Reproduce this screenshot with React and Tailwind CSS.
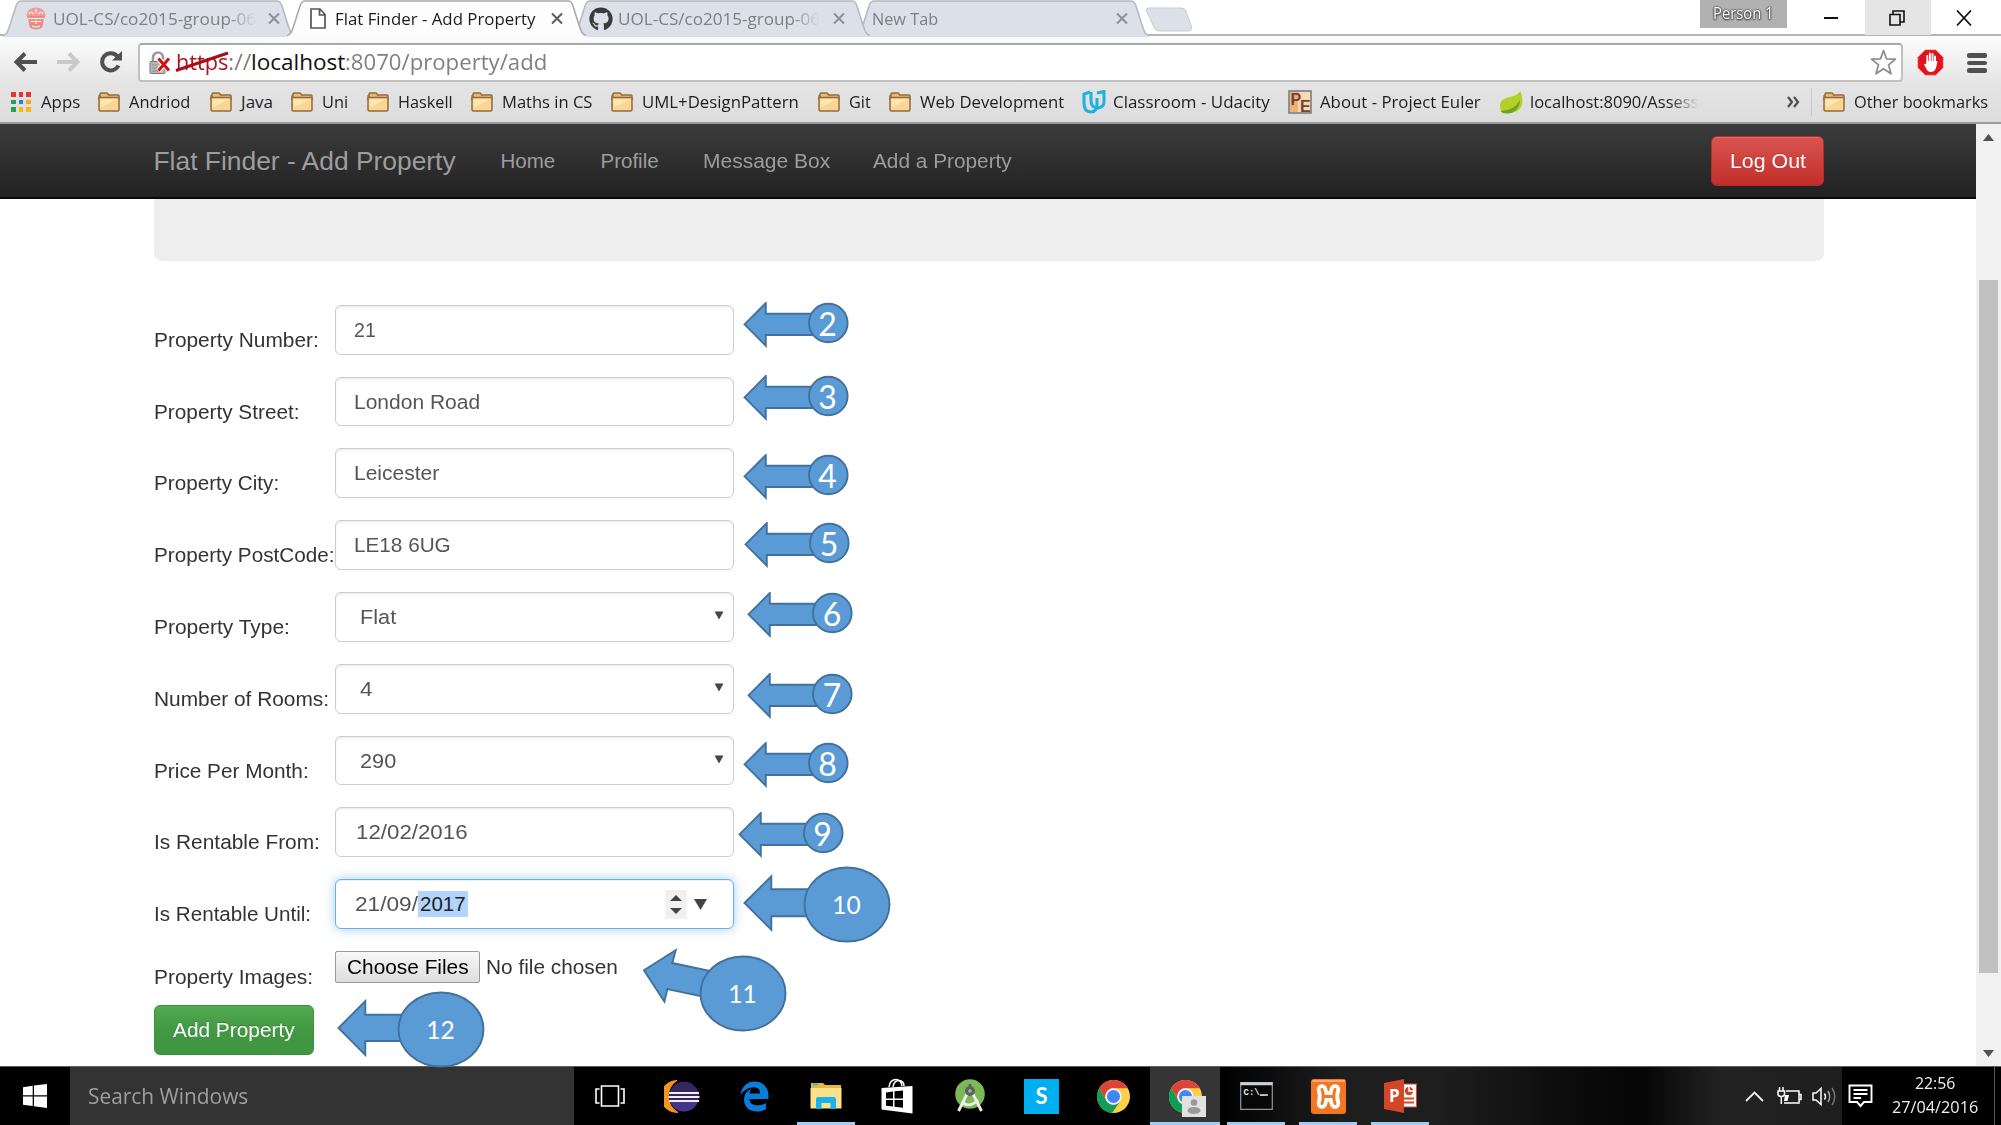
import { useLayoutEffect, useRef } from "react";
import { FaEdgeLegacy, FaGithub } from "react-icons/fa";

const ARIAL = "font-['Liberation_Sans',Arial,sans-serif]";
const SEGOE = "font-['Open_Sans','Noto_Sans',sans-serif]";

/* One line of text, condensed or stretched to the width of its box. */
function Fit({ className = "", children }) {
  const outer = useRef(null);
  const inner = useRef(null);
  useLayoutEffect(() => {
    const ratio = outer.current.getBoundingClientRect().width / inner.current.offsetWidth;
    inner.current.style.transform = `scaleX(${ratio})`;
  }, []);
  return (
    <span ref={outer} className={`block shrink-0 whitespace-nowrap ${className}`}>
      <span ref={inner} className="inline-block origin-left">{children}</span>
    </span>
  );
}

/* ---------- browser chrome ---------- */

function TabShape({ w, active }) {
  const d = `M1 35.5 C5 34.5 6 31 8 25 L14 6 Q15.5 1 19 1 H${w - 19} Q${w - 15.5} 1 ${w - 14} 6 L${w - 8} 25 C${w - 6} 31 ${w - 5} 34.5 ${w - 1} 35.5`;
  return (
    <svg className="absolute inset-0" width={w} height="37" viewBox={`0 0 ${w} 37`}>
      <path d={`${d} V37 H1 Z`} fill={active ? "#fdfdfd" : "#dce0e8"} />
      <path d={d} fill="none" stroke={active ? "#a9a9a9" : "#b7babf"} strokeWidth="1.6" />
    </svg>
  );
}

function TabClose({ color }) {
  return (
    <svg width="12" height="13" viewBox="0 0 12 13" className="shrink-0">
      <path d="M1 1.5 L11 11.5 M11 1.5 L1 11.5" stroke={color} strokeWidth="2" />
    </svg>
  );
}

function Crest() {
  return (
    <svg width="20" height="23" viewBox="0 0 20 23" className="shrink-0">
      <ellipse cx="10" cy="8" rx="9.5" ry="7.6" fill="#f19a96" />
      <path d="M2 9 H18 L16.5 20 Q10 25 3.5 20 Z" fill="#ee8883" />
      <path d="M3 7 Q5 3.500 7.500 7 M12.500 7 Q15 3.500 17 7 M10 2 V6 M2.500 11.500 H17.500 M5 14.500 H8.500 M11.500 14.500 H15 M6 19 Q10 21 14 19 M10 13 V17" stroke="#fff" strokeWidth="1.200" fill="none" />
    </svg>
  );
}

function TabStrip() {
  const text = `${SEGOE} text-[17px] leading-[24px]`;
  return (
    <div className="flex h-[36px] shrink-0 items-start border-b-2 border-[#b5b5b5] bg-white">
      <div className="relative ml-[2px] h-[35px] w-[294px] shrink-0">
        <TabShape w={294} />
        <div className="relative flex h-[37px] items-center pl-[24px]">
          <Crest />
          <div className="ml-[7px] mr-[12px] overflow-hidden [mask-image:linear-gradient(to_right,black_86%,transparent_100%)]">
            <Fit className={`${text} w-[203px] text-[#7d7f83]`}>UOL-CS/co2015-group-06</Fit>
          </div>
          <TabClose color="#8d9095" />
        </div>
      </div>
      <div className="relative z-20 -ml-[10px] h-[37px] w-[301px] shrink-0">
        <TabShape w={301} active />
        <div className="relative flex h-[37px] items-center pl-[24px]">
          <svg width="16" height="21" viewBox="0 0 16 21" className="shrink-0">
            <path d="M1 1 H10 L15 6.500 V20 H1 Z M9.500 1 V7 H15" fill="#fff" stroke="#555" strokeWidth="1.700" />
          </svg>
          <Fit className={`${text} ml-[9px] mr-[15px] w-[201px] text-[#1c1c1c]`}>Flat Finder - Add Property</Fit>
          <TabClose color="#5d5d5d" />
        </div>
      </div>
      <div className="relative z-10 -ml-[16px] h-[35px] w-[300px] shrink-0">
        <TabShape w={300} />
        <div className="relative flex h-[37px] items-center pl-[18px]">
          <FaGithub size={24} color="#3b3b3b" className="shrink-0" />
          <div className="ml-[5px] mr-[13px] overflow-hidden [mask-image:linear-gradient(to_right,black_86%,transparent_100%)]">
            <Fit className={`${text} w-[202px] text-[#7d7f83]`}>UOL-CS/co2015-group-06</Fit>
          </div>
          <TabClose color="#8d9095" />
        </div>
      </div>
      <div className="relative -ml-[16px] h-[35px] w-[295px] shrink-0">
        <TabShape w={295} />
        <div className="relative flex h-[37px] items-center pl-[17px]">
          <Fit className={`${text} mr-[178px] w-[66px] text-[#7d7f83]`}>New Tab</Fit>
          <TabClose color="#8d9095" />
        </div>
      </div>
      <svg width="48" height="25" viewBox="0 0 48 25" className="-ml-[5px] mt-[7px] shrink-0">
        <path d="M3 1 H36 Q40 1 41 4 L46.500 20 Q47 24 43 24 H14 Q10 24 9 20 L1.500 4 Q1 1 3 1 Z" fill="#dce0e8" stroke="#c9ccd1" />
      </svg>
      <div className="ml-auto flex items-start">
        <div className="flex h-[28px] w-[87px] items-center justify-center bg-[#b1b1b1] pb-[2px]">
          <Fit className={`${SEGOE} w-[61px] text-[16px] leading-[22px] text-white [text-shadow:0_0_2px_#333,0_0_2px_#444,0_1px_2px_#333]`}>Person 1</Fit>
        </div>
        <div className="flex h-[36px] w-[78px] items-center justify-center pl-[9px]">
          <div className="h-[2px] w-[14px] bg-[#111]" />
        </div>
        <div className="flex h-[35px] w-[66px] items-center justify-center bg-[#e5e5e5] pr-[2px]">
          <svg width="16" height="16" viewBox="0 0 16 16" fill="none" stroke="#111" strokeWidth="1.600">
            <path d="M1 4.500 H11 V15 H1 Z M4 4 V1 H15 V12 H11.500" />
          </svg>
        </div>
        <div className="flex h-[36px] w-[70px] items-center pl-[25px]">
          <svg width="16" height="16" viewBox="0 0 16 16">
            <path d="M1 0.500 L15 15.500 M15 0.500 L1 15.500" stroke="#111" strokeWidth="1.700" />
          </svg>
        </div>
      </div>
    </div>
  );
}

function Toolbar() {
  return (
    <div className="flex h-[53px] shrink-0 items-start pt-[7px]">
      <svg width="23" height="20" viewBox="0 0 23 20" className="ml-[14px] mt-[9px] shrink-0">
        <path d="M11 1.500 L2.500 10 L11 18.500 M3 10 H23" fill="none" stroke="#505050" strokeWidth="4" />
      </svg>
      <svg width="23" height="20" viewBox="0 0 23 20" className="ml-[20px] mt-[9px] shrink-0">
        <path d="M12 1.500 L20.500 10 L12 18.500 M20 10 H0" fill="none" stroke="#c9c9c9" strokeWidth="4" />
      </svg>
      <svg width="24" height="22" viewBox="0 0 24 22" className="ml-[19px] mt-[8px] shrink-0">
        <path d="M18.500 5.500 A8.600 8.600 0 1 0 19.500 14.500" fill="none" stroke="#505050" strokeWidth="4" />
        <path d="M23 0 V9.500 H13 Z" fill="#505050" />
      </svg>
      <div className="ml-[15px] flex h-[39px] w-[1765px] shrink-0 items-center rounded-[4px] border-2 border-[#c0c0c0] border-t-[#a9a9a9] bg-white pl-[9px]">
        <svg width="22" height="25" viewBox="0 0 22 25" className="mt-[1px] shrink-0">
          <path d="M4 11 V6.500 A5 5 0 0 1 14 6.500 V11" fill="none" stroke="#9b9b9b" strokeWidth="2.600" />
          <rect x="1" y="10.500" width="15" height="12" rx="1" fill="#b9b9b9" stroke="#777" />
          <path d="M3 14 H9 M3 17 H9 M3 20 H9" stroke="#8d8d8d" />
          <path d="M9.500 7.500 L20 19.500 M20 7.500 L9.500 19.500" stroke="#fff" strokeWidth="5" />
          <path d="M9.500 7.500 L20 19.500 M20 7.500 L9.500 19.500" stroke="#cf1010" strokeWidth="3" />
        </svg>
        <div className={`${SEGOE} -mt-[1px] ml-[5px] flex text-[22.5px] leading-[34px]`}>
          <div className="relative text-[#a8151f]">
            <Fit className="w-[52px]">https</Fit>
            <svg width="56" height="22" viewBox="0 0 56 22" className="absolute -left-[1px] top-[6px]">
              <path d="M1 19.500 L53 2" stroke="#a80f19" strokeWidth="3" />
            </svg>
          </div>
          <Fit className="w-[23px] text-[#808080]">://</Fit>
          <Fit className="w-[94px] text-[#111]">localhost</Fit>
          <Fit className="w-[202px] text-[#808080]">:8070/property/add</Fit>
        </div>
        <svg width="27" height="27" viewBox="0 0 27 27" className="ml-auto mr-[4px]">
          <path d="M13.500 1.500 L16.500 9.800 L25.500 10.200 L18.500 15.800 L21 24.800 L13.500 19.800 L6 24.800 L8.500 15.800 L1.500 10.200 L10.500 9.800 Z" fill="#fff" stroke="#8b8b8b" strokeWidth="1.700" strokeLinejoin="round" />
        </svg>
      </div>
      <svg width="27" height="27" viewBox="0 0 27 27" className="ml-[14px] mt-[6px] shrink-0">
        <path d="M8.200 0.700 H18.800 L26.300 8.200 V18.800 L18.800 26.300 H8.200 L0.700 18.800 V8.200 Z" fill="#e4121c" stroke="#f1b7b7" strokeWidth="0.800" />
        <path d="M10.300 15 V7 M12.900 13 V4.500 M15.500 13 V5 M18 14 V7.500" stroke="#fff" strokeWidth="1.900" strokeLinecap="round" />
        <path d="M9.400 12 H19 L20.500 12.500 L19 19 Q17.500 23 14 23 Q10.500 23 9.500 20 L7 15.500 Q7.500 14 9.400 15.500 Z" fill="#fff" />
      </svg>
      <div className="ml-[23px] mt-[10px] flex flex-col gap-[3px]">
        <div className="h-[4.500px] w-[20px] rounded-[2px] bg-[#505050]" />
        <div className="h-[4.500px] w-[20px] rounded-[2px] bg-[#505050]" />
        <div className="h-[4.500px] w-[20px] rounded-[2px] bg-[#505050]" />
      </div>
    </div>
  );
}

function Folder() {
  return (
    <svg width="22" height="20" viewBox="0 0 22 20" className="shrink-0">
      <path d="M2 4 V2 Q2 1 3 1 H9 Q10 1 10.500 3 H20 Q21 3 21 4 V7 H1 V4 Z" fill="#e8bb72" stroke="#94693c" strokeWidth="1.500" />
      <path d="M1.800 5.500 H20.200 Q21 5.500 21 6.500 V17.500 Q21 19 19.500 19 H2.500 Q1 19 1 17.500 V6.500 Q1 5.500 1.800 5.500 Z" fill="#fbd692" stroke="#94693c" strokeWidth="1.500" />
      <path d="M2.500 7 H19.500 L3 15 Z" fill="#fee6b6" />
    </svg>
  );
}

const APP_DOTS = ["#e8372c", "#e8372c", "#e8372c", "#23a155", "#2a7bf0", "#f5a623", "#23a155", "#fbb70f", "#fbb70f"];

const FOLDERS = [
  ["Andriod", "w-[61px] mr-[20px]"],
  ["Java", "w-[32px] mr-[18px]"],
  ["Uni", "w-[26px] mr-[18.5px]"],
  ["Haskell", "w-[54.5px] mr-[18.5px]"],
  ["Maths in CS", "w-[90.5px] mr-[18.5px]"],
  ["UML+DesignPattern", "w-[157px] mr-[19px]"],
  ["Git", "w-[22px] mr-[18.5px]"],
  ["Web Development", "w-[144.5px] mr-[17.5px]"],
];

function Bookmarks() {
  return (
    <div className={`${SEGOE} flex h-[35px] shrink-0 items-center border-b-2 border-[#9a9a9a] pb-[7px] pl-[11px] text-[17px] leading-[26px] text-[#1d1d1d]`}>
      <div className="grid shrink-0 grid-cols-3 gap-x-[3px] gap-y-[3px]">
        {APP_DOTS.map((c, i) => (
          <div key={i} className="h-[4.700px] w-[4.700px]" style={{ background: c }} />
        ))}
      </div>
      <Fit className="ml-[10px] mr-[17.5px] w-[39.5px]">Apps</Fit>
      {FOLDERS.map(([name, cls]) => (
        <div key={name} className="flex shrink-0 items-center gap-[9px]">
          <Folder />
          <Fit className={cls}>{name}</Fit>
        </div>
      ))}
      <svg width="24" height="24" viewBox="0 0 24 24" className="shrink-0">
        <path d="M8 2 L2 4 V13 Q2 22 9 22 Q15 22 15 14 V8 M15 3 L22 1.500 V12 Q22 17 16 18 Q9 17.500 9 11 V2" fill="none" stroke="#1cb1e2" strokeWidth="3" />
      </svg>
      <Fit className="ml-[7px] mr-[18px] w-[156.5px]">Classroom - Udacity</Fit>
      <svg width="24" height="24" viewBox="0 0 24 24" className="shrink-0">
        <rect x="1" y="1" width="22" height="22" fill="#fbd8b3" stroke="#777" strokeWidth="1.500" />
        <path d="M2 2 H10 V22 H2 Z" fill="#efb07c" />
        <text x="2.500" y="15" fontSize="16" fontWeight="700" fontFamily="Liberation Sans" fill="#6b4636">P</text>
        <text x="12" y="21.500" fontSize="16" fontWeight="700" fontFamily="Liberation Sans" fill="#6b4636">E</text>
      </svg>
      <Fit className="ml-[8px] mr-[18.5px] w-[161px]">About - Project Euler</Fit>
      <svg width="24" height="23" viewBox="0 0 24 23" className="shrink-0">
        <path d="M21.500 0 Q27 16 17 20.500 Q8 24 2 20 Q-2 9 9 6.500 Q18 5 21.500 0 Z" fill="#b3d028" />
        <path d="M1.500 20 Q15 20 21 9 Q20 22 8 22.500 Q3 22.500 1.500 20 Z" fill="#6ba51f" />
      </svg>
      <div className="ml-[7px] overflow-hidden [mask-image:linear-gradient(to_right,black_82%,transparent_100%)]">
        <Fit className="w-[169px]">localhost:8090/Assess</Fit>
      </div>
      <svg width="13" height="12" viewBox="0 0 13 12" className="ml-[88px] shrink-0">
        <path d="M1 1 L5 6 L1 11 M7 1 L11 6 L7 11" fill="none" stroke="#4c4c4c" strokeWidth="2.200" />
      </svg>
      <div className="ml-[11px] mr-[11px] h-[28px] w-px bg-[#c3cbd2]" />
      <Folder />
      <Fit className="ml-[8.5px] w-[134.5px]">Other bookmarks</Fit>
    </div>
  );
}

/* ---------- web page ---------- */

const NAV = [
  ["Home", "w-[55px] mr-[45px]"],
  ["Profile", "w-[58px] mr-[44px]"],
  ["Message Box", "w-[127px] mr-[43px]"],
  ["Add a Property", "w-[139px]"],
];

function Navbar() {
  return (
    <div className="flex h-[75px] shrink-0 items-center border-b-2 border-[#090909] bg-linear-to-b from-[#3c3c3c] to-[#222222] px-[153.5px] text-[#9d9d9d]">
      <Fit className="mr-[45px] w-[302px] text-[26.4px] leading-[36px]">Flat Finder - Add Property</Fit>
      {NAV.map(([name, cls]) => (
        <Fit key={name} className={`${cls} text-[20.5px] leading-[32px]`}>{name}</Fit>
      ))}
      <div className="ml-auto mr-[-1.5px] flex h-[50px] w-[113px] items-center justify-center rounded-[6px] border-[1.500px] border-[#b92c28] bg-linear-to-b from-[#d9534f] to-[#c12e2a] text-[20.5px] leading-[32px] text-white shadow-[inset_0_1px_0_rgba(255,255,255,0.15)] [text-shadow:0_-1px_0_rgba(0,0,0,0.2)]">
        <Fit className="w-[76px]">Log Out</Fit>
      </div>
    </div>
  );
}

const FIELDS = [
  { label: "Property Number:", lw: "w-[165px]", value: "21", vw: "w-[22px]", kind: "text" },
  { label: "Property Street:", lw: "w-[146px]", value: "London Road", vw: "w-[126px]", kind: "text" },
  { label: "Property City:", lw: "w-[125px]", value: "Leicester", vw: "w-[85px]", kind: "text" },
  { label: "Property PostCode:", lw: "w-[180.5px]", value: "LE18 6UG", vw: "w-[97px]", kind: "text" },
  { label: "Property Type:", lw: "w-[136px]", value: "Flat", vw: "w-[36px]", kind: "select" },
  { label: "Number of Rooms:", lw: "w-[175px]", value: "4", vw: "w-[12px]", kind: "select" },
  { label: "Price Per Month:", lw: "w-[155px]", value: "290", vw: "w-[36px]", kind: "select" },
  { label: "Is Rentable From:", lw: "w-[166px]", value: "12/02/2016", vw: "w-[112px]", kind: "date" },
];

const INPUT = "flex h-[49.8px] w-[398.5px] items-center rounded-[6px] border-[1.600px] border-[#ccc] bg-white text-[#555] shadow-[inset_0_1.500px_1.500px_rgba(0,0,0,0.075)] leading-[32px]";

function Label({ className, children }) {
  return (
    <div className="w-[181.500px] shrink-0 pt-[19px] leading-[32px] text-[#333]">
      <Fit className={className}>{children}</Fit>
    </div>
  );
}

function Field({ field }) {
  const { label, lw, value, vw, kind } = field;
  const pad = kind === "text" ? "pl-[18px]" : kind === "select" ? "pl-[23.5px]" : "pl-[19.5px]";
  return (
    <div className="flex h-[49.800px]">
      <Label className={lw}>{label}</Label>
      <div className={`${INPUT} ${pad}`}>
        <Fit className={vw}>{value}</Fit>
        {kind === "select" && (
          <svg width="10" height="9" viewBox="0 0 10 9" className="ml-auto mr-[8.5px] mt-[-3px]">
            <path d="M0.500 0.500 H9.500 L5 8.500 Z" fill="#444" />
          </svg>
        )}
      </div>
    </div>
  );
}

function FocusedDate() {
  return (
    <div className="flex h-[49.800px]">
      <Label className="w-[157px]">Is Rentable Until:</Label>
      <div className="flex h-[49.800px] w-[398.5px] items-center rounded-[6px] border-[1.800px] border-[#66afe9] bg-white pl-[19px] leading-[26px] text-[#555] shadow-[inset_0_1px_1px_rgba(0,0,0,0.075),0_0_12px_rgba(102,175,233,0.600)]">
        <Fit className="w-[63px]">21/09/</Fit>
        <div className="h-[26px] bg-[#b3d4fd] px-[2px] text-[#222]">
          <Fit className="w-[46px]">2017</Fit>
        </div>
        <div className="ml-auto mr-[7px] flex h-[29px] w-[22px] flex-col items-center justify-center gap-[7px] bg-[#f0f0f0]">
          <svg width="12" height="6" viewBox="0 0 12 6"><path d="M0 6 H12 L6 0 Z" fill="#444" /></svg>
          <svg width="12" height="6" viewBox="0 0 12 6"><path d="M0 0 H12 L6 6 Z" fill="#444" /></svg>
        </div>
        <svg width="13" height="11" viewBox="0 0 13 11" className="mr-[26px]"><path d="M0 0 H13 L6.500 11 Z" fill="#444" /></svg>
      </div>
    </div>
  );
}

function PropertyForm() {
  return (
    <div className="ml-[153.5px] mt-[43.900px] flex flex-col gap-[22px] text-[20.5px]">
      {FIELDS.map((f) => <Field key={f.label} field={f} />)}
      <FocusedDate />
      <div className="flex h-[32px]">
        <div className="w-[181.500px] shrink-0 pt-[10px] leading-[32px] text-[#333]">
          <Fit className="w-[159px]">Property Images:</Fit>
        </div>
        <div className="flex h-[32px] w-[145px] items-center justify-center rounded-[2px] border-[1.500px] border-[#9a9a9a] bg-linear-to-b from-[#f8f8f8] to-[#dddddd] leading-[28px] text-black">
          <Fit className="w-[122px]">Choose Files</Fit>
        </div>
        <Fit className="ml-[5.500px] w-[132px] leading-[32px] text-[#333]">No file chosen</Fit>
      </div>
      <div className="flex h-[50px] w-[160px] items-center justify-center rounded-[6px] border-[1.500px] border-[#3e8f3e] bg-linear-to-b from-[#51a951] to-[#419641] to-60% leading-[32px] text-white [text-shadow:0_-1px_0_rgba(0,0,0,0.2)]">
        <Fit className="w-[122px]">Add Property</Fit>
      </div>
    </div>
  );
}

function Scrollbar() {
  return (
    <div className="flex w-[25px] shrink-0 flex-col items-center bg-[#f1f1f1]">
      <svg width="11" height="7" viewBox="0 0 11 7" className="mt-[10px] shrink-0"><path d="M0 7 H11 L5.500 0 Z" fill="#505050" /></svg>
      <div className="mt-[139px] h-[693px] w-[19px] shrink-0 bg-[#c1c1c1]" />
      <svg width="11" height="7" viewBox="0 0 11 7" className="mb-[9px] mt-auto shrink-0"><path d="M0 0 H11 L5.500 7 Z" fill="#505050" /></svg>
    </div>
  );
}

/* ---------- numbered callouts floating over the page ---------- */

const SMALL = [
  [2, 742.5, 302], [3, 742.5, 374.700], [4, 742.5, 454], [5, 744, 522],
  [6, 747, 591.800], [7, 747, 672.700], [8, 742.5, 742], [9, 737.5, 812],
];

const BIG = [
  [10, 743, 866, 61, "M1.500 37 L28.300 10.300 V23.300 H80 V50.300 H28.300 V63.700 Z"],
  [11, 642, 955, 58, "M2 15.300 L33.800 -5 L30.300 8 L82 19 L72 44 L25.400 34 L22.400 46.700 Z"],
  [12, 337, 991, 61, "M1.500 37 L28.300 10 V23.700 H80 V50 H28.300 V64 Z"],
];

function Callouts() {
  return (
    <>
      {SMALL.map(([n, x, y]) => (
        <div key={n} className="absolute h-[46px] w-[107px]" style={{ left: x, top: y }}>
          <svg width="107" height="46" viewBox="0 0 107 46" fill="#5b9bd5" stroke="#41719c" strokeWidth="1.900">
            <path d="M1.500 22.300 L22.800 1 V11.700 H80 V33 H22.800 V43.600 Z" />
            <circle cx="85.300" cy="21" r="19.300" />
          </svg>
          <div className="absolute left-[65px] top-[2px] flex h-[40px] w-[40px] items-center justify-center font-[Lato,sans-serif] text-[32px] leading-[40px] text-white">{n}</div>
        </div>
      ))}
      {BIG.map(([n, x, y, ex, d]) => (
        <div key={n} className="absolute h-[78px] w-[150px]" style={{ left: x, top: y }}>
          <svg width="150" height="78" viewBox="0 0 150 78" className="overflow-visible" fill="#5b9bd5" stroke="#41719c" strokeWidth="1.900">
            <path d={d} />
            <ellipse cx={ex + 43} cy="38.500" rx="42.500" ry="37" />
          </svg>
          <div className="absolute top-[19px] w-[86px] text-center font-[Lato,sans-serif] text-[24.5px] leading-[40px] text-white" style={{ left: ex - 0.5 }}>{n}</div>
        </div>
      ))}
    </>
  );
}

/* ---------- taskbar ---------- */

function ChromeLogo() {
  return (
    <svg width="33" height="33" viewBox="0 0 48 48">
      <circle cx="24" cy="24" r="24" fill="#fdd04a" />
      <path d="M3.200 12 A24 24 0 0 1 44.800 12 H24 A12 12 0 0 0 13.600 30 Z" fill="#db4437" />
      <path d="M3.200 12 A24 24 0 0 0 22 48 L34.400 30 A12 12 0 0 1 13.600 30 Z" fill="#0f9d58" />
      <circle cx="24" cy="24" r="12" fill="#f1f1f1" />
      <circle cx="24" cy="24" r="9.500" fill="#4285f4" />
    </svg>
  );
}

function Eclipse() {
  return (
    <svg width="36" height="33" viewBox="0 0 36 33">
      <path d="M13 0.500 A17 16 0 0 0 14 32.500 A20 19 0 0 1 13 0.500 Z" fill="#f7941e" stroke="#f7941e" />
      <circle cx="20" cy="16.500" r="15" fill="#33285c" />
      <path d="M6 21 H34 Q31 31 20 31.500 Q9 31 6 21 Z" fill="#46338b" />
      <path d="M5 13 H35 M4.500 17 H35.500 M5 21 H35" stroke="#f2effa" strokeWidth="2" />
    </svg>
  );
}

function Explorer() {
  return (
    <svg width="32" height="28" viewBox="0 0 32 28">
      <path d="M1 1 H13 L15 3 H31 V26 H1 Z" fill="#e9b83c" />
      <path d="M0.500 6 H31.500 V26.500 H0.500 Z" fill="#fbe18c" />
      <path d="M3 2.500 H8" stroke="#2fb5e8" strokeWidth="2" />
      <path d="M6 27 V17 Q6 15 8 15 H24 Q26 15 26 17 V27 H20.500 V21 H11.500 V27 Z" fill="#16b3f0" />
    </svg>
  );
}

function Store() {
  return (
    <svg width="32" height="36" viewBox="0 0 32 36">
      <path d="M8 9 Q9 1.500 15 1.500 Q20 1.500 21 8 M12 9 Q13 2.500 18 2.500 Q23 3 23 8" fill="none" stroke="#fff" strokeWidth="1.500" />
      <path d="M0.500 10 L31.500 8 V35.500 L0.500 31.500 Z" fill="#fff" />
      <path d="M5 14.500 L12 13.500 V20.500 H5 Z M13.500 13.300 L22 12.500 V20.500 H13.500 Z M5 22 H12 V28.500 L5 27.800 Z M13.500 22 H22 V29.700 L13.500 28.800 Z" fill="#000" />
    </svg>
  );
}

function AndroidStudio() {
  return (
    <svg width="30" height="34" viewBox="0 0 30 34">
      <circle cx="15" cy="15" r="14.800" fill="#7cb853" />
      <path d="M12 15 L3.500 32 M18 15 L26.500 32" stroke="#ededed" strokeWidth="2.800" />
      <path d="M8 24 Q15 29 23 21" fill="none" stroke="#ededed" strokeWidth="2.800" />
      <circle cx="15" cy="12" r="5" fill="#5d6163" />
      <path d="M15 5 V9" stroke="#5d6163" strokeWidth="3" />
      <circle cx="15" cy="12" r="1.800" fill="#9cc67c" />
    </svg>
  );
}

function Skype() {
  return <div className="flex h-[35px] w-[35px] items-center justify-center bg-[#00aff0] font-[Lato,sans-serif] text-[22px] font-bold leading-none text-white">S</div>;
}

function ChromeProfile() {
  return (
    <div className="relative h-[33px] w-[33px]">
      <ChromeLogo />
      <svg width="24" height="21" viewBox="0 0 24 21" className="absolute left-[13px] top-[16px]">
        <path d="M0 0 H24 V21 H0 Z" fill="#e1e1e1" />
        <circle cx="12" cy="6.500" r="3.300" fill="#9a9a9a" />
        <ellipse cx="12" cy="14.500" rx="6.500" ry="3.500" fill="#9a9a9a" />
      </svg>
    </div>
  );
}

function Cmd() {
  return (
    <svg width="33" height="28" viewBox="0 0 33 28">
      <path d="M0.700 0.700 H32.300 V27.300 H0.700 Z" fill="#070707" stroke="#8e979c" strokeWidth="1.200" />
      <path d="M0.500 1.800 H32.500" stroke="#cbd1d6" strokeWidth="3" />
      <text x="3.500" y="13" fontSize="9" fontWeight="700" fontFamily="Liberation Mono" fill="#eee">C:\_</text>
      <path d="M20 13 H28" stroke="#eee" strokeWidth="1.400" />
    </svg>
  );
}

function Xampp() {
  const bone = "M11 10.500 Q13.500 17.500 11 24.500 M24 10.500 Q21.500 17.500 24 24.500 M12 17.500 H23";
  return (
    <svg width="35" height="35" viewBox="0 0 35 35" fill="none" strokeLinecap="round">
      <rect width="35" height="35" rx="3" fill="#f37623" />
      <path d="M2 2 H33" stroke="#f9a873" strokeWidth="2" />
      <path d={bone} stroke="#fff" strokeWidth="10.500" />
      <path d={bone} stroke="#f37623" strokeWidth="3" />
    </svg>
  );
}

function PowerPoint() {
  return (
    <svg width="33" height="34" viewBox="0 0 33 34">
      <path d="M17 5 H32.500 V28 H17 Z" fill="#fff" stroke="#d24726" strokeWidth="1.200" />
      <circle cx="25" cy="12" r="4.200" fill="#d24726" />
      <path d="M25 7 V12 H30" stroke="#fff" strokeWidth="1.500" fill="none" />
      <path d="M20 19.500 H30 M20 23.500 H30" stroke="#d24726" strokeWidth="2" />
      <path d="M0 4 L20 0 V34 L0 30 Z" fill="#d24726" />
      <text x="5" y="23" fontSize="17" fontWeight="700" fontFamily="Open Sans" fill="#fff">P</text>
    </svg>
  );
}

const TASKS = [
  { icon: <Eclipse />, w: "w-[72px]" },
  { icon: <FaEdgeLegacy size={31} color="#0a7cdb" />, w: "w-[72px]" },
  { icon: <Explorer />, w: "w-[71px]", line: "w-[58px]" },
  { icon: <Store />, w: "w-[72px]" },
  { icon: <AndroidStudio />, w: "w-[73px]" },
  { icon: <Skype />, w: "w-[71px]" },
  { icon: <ChromeLogo />, w: "w-[73px]" },
  { icon: <ChromeProfile />, w: "w-[70px] bg-[#353535]", line: "w-[70px]" },
  { icon: <Cmd />, w: "w-[72px]", line: "w-[58px]" },
  { icon: <Xampp />, w: "w-[72px]", line: "w-[58px]" },
  { icon: <PowerPoint />, w: "w-[72px]", line: "w-[58px]" },
];

function Taskbar() {
  return (
    <div className="flex h-[59px] shrink-0 items-stretch border-t-[1.500px] border-[#5e5e5e] bg-[linear-gradient(to_right,#000_61%,#1e1e1e_67%,#1e1e1e_72%,#0d0d0d_78%,#050505_82%,#222_86%,#1e1e1e_92%)]">
      <div className="flex w-[70px] items-center justify-center bg-black">
        <svg width="24" height="24" viewBox="0 0 24 24" fill="#fff">
          <path d="M0 3.200 L9.700 1.800 V11.300 H0 Z M11 1.600 L24 0 V11.300 H11 Z M0 12.600 H9.700 V22.100 L0 20.800 Z M11 12.600 H24 V24 L11 22.300 Z" />
        </svg>
      </div>
      <div className="flex w-[504px] items-center bg-[#333] pl-[18px]">
        <Fit className={`${SEGOE} w-[160px] text-[21px] leading-[32px] text-[#9f9f9f]`}>Search Windows</Fit>
      </div>
      <div className="flex w-[72px] items-center justify-center">
        <svg width="30" height="22" viewBox="0 0 30 22" fill="none" stroke="#fff" strokeWidth="1.600">
          <path d="M6.500 1 H23.500 V21 H6.500 Z M4.500 4 H1 V18 H4.500 M25.500 4 H29 V18 H25.500" />
        </svg>
      </div>
      {TASKS.map((t, i) => (
        <div key={i} className={`relative flex shrink-0 items-center justify-center ${t.w}`}>
          {t.icon}
          {t.line && <div className={`absolute bottom-0 h-[3px] bg-[#9fcdf7] ${t.line}`} />}
        </div>
      ))}
      <div className="ml-auto flex items-center">
        <svg width="19" height="11" viewBox="0 0 19 11" className="mr-[13px]"><path d="M1 10 L9.500 1.500 L18 10" fill="none" stroke="#eee" strokeWidth="1.800" /></svg>
        <svg width="25" height="18" viewBox="0 0 25 18" className="mr-[10px]" fill="none" stroke="#fff" strokeWidth="1.500">
          <path d="M9 4 H22 V16 H7 M22 7.500 H24 V12.500 H22 M2.500 0 V4 M6 0 V4 M1 4 H7.500 V7 Q7.500 9.500 4.300 9.500 Q1 9.500 1 7 Z M4.300 9.500 V17" />
          <path d="M8 8 H12 L10.500 14 H7 Z" fill="#fff" stroke="none" />
        </svg>
        <svg width="26" height="21" viewBox="0 0 26 21" className="mr-[4px]" fill="none" stroke="#fff" strokeWidth="1.500">
          <path d="M1 7 H4 L9 2.500 V18.500 L4 14 H1 Z M12.500 7.500 Q14.500 10.500 12.500 13.500" />
          <path d="M16 5 Q19.500 10.500 16 16" stroke="#aaa" />
          <path d="M20 2 Q25.500 10.500 20 19" stroke="#777" />
        </svg>
      </div>
      <div className="flex w-[159px] items-center bg-black pl-[6px]">
        <svg width="25" height="24" viewBox="0 0 25 24" fill="none" stroke="#fff" strokeWidth="1.900">
          <path d="M1.500 1.500 H23.500 V18 H16 L12.500 22 L9 18 H1.500 Z M5.500 6 H19.500 M5.500 10 H19.500 M5.500 14 H13" />
        </svg>
        <div className={`${SEGOE} -mt-[2px] ml-[19px] flex flex-col items-center text-[17px] leading-[24.500px] text-[#eee]`}>
          <Fit className="w-[40px]">22:56</Fit>
          <Fit className="w-[86px]">27/04/2016</Fit>
        </div>
        <div className="ml-[16px] h-full w-px bg-[#555]" />
      </div>
    </div>
  );
}

export default function App() {
  return (
    <div className={`${ARIAL} relative flex h-[1125px] w-[2001px] flex-col overflow-hidden bg-white`}>
      <TabStrip />
      <div className="flex h-[88px] shrink-0 flex-col bg-linear-to-b from-[#fdfdfd] via-[#e4e4e4] via-55% to-[#dcdcdc]">
        <Toolbar />
        <Bookmarks />
      </div>
      <div className="flex min-h-0 flex-1">
        <div className="flex min-w-0 flex-1 flex-col overflow-hidden">
          <Navbar />
          <div className="ml-[154px] mr-[152.500px] h-[62px] shrink-0 rounded-b-[8px] bg-[#eeeeee]" />
          <PropertyForm />
        </div>
        <Scrollbar />
      </div>
      <Callouts />
      <Taskbar />
    </div>
  );
}
